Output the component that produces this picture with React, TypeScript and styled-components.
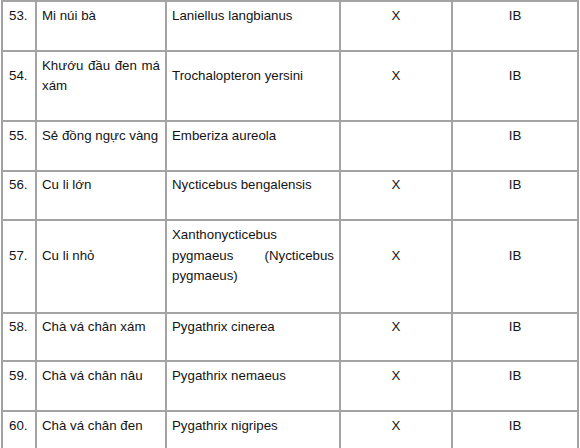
import React from "react";
import styled, { createGlobalStyle } from "styled-components";

const Global = createGlobalStyle`
  html, body { margin: 0; padding: 0; background: #ffffff; }
  body { font-family: "Liberation Sans", Arial, sans-serif; }
`;

const Page = styled.div`
  width: 580px;
  height: 448px;
  overflow: hidden;
  background: #fff;
  padding-left: 1px;
  box-sizing: border-box;
`;

const Table = styled.table`
  border-collapse: collapse;
  table-layout: fixed;
  width: 578px;
  font-family: "Liberation Sans", Arial, sans-serif;
  font-size: 13.3px;
  line-height: 20.5px;
  color: #141414;
`;

const Col = styled.col<{ $w: number }>`
  width: ${(p) => p.$w}px;
`;

const Row = styled.tr<{ $h: number }>`
  height: ${(p) => p.$h}px;
`;

const Cell = styled.td<{ $align?: "left" | "center" | "justify" }>`
  border: 2px solid #a3a3a3;
  padding: 3px 5px 23px 5px;
  vertical-align: middle;
  text-align: ${(p) => p.$align ?? "justify"};
  overflow: hidden;
`;

const NumCell = styled(Cell)`
  padding-left: 6px;
  padding-right: 3px;
  text-align: left;
`;

type Item = {
  no: string;
  name: string;
  sci: string;
  x: boolean;
  group: string;
  h: number;
};

const rows: Item[] = [
  { no: "53.", name: "Mi núi bà", sci: "Laniellus langbianus", x: true, group: "IB", h: 50 },
  { no: "54.", name: "Khướu đầu đen má xám", sci: "Trochalopteron yersini", x: true, group: "IB", h: 70 },
  { no: "55.", name: "Sẻ đồng ngực vàng", sci: "Emberiza aureola", x: false, group: "IB", h: 50 },
  { no: "56.", name: "Cu li lớn", sci: "Nycticebus bengalensis", x: true, group: "IB", h: 47 },
  { no: "57.", name: "Cu li nhỏ", sci: "Xanthonycticebus pygmaeus (Nycticebus pygmaeus)", x: true, group: "IB", h: 93 },
  { no: "58.", name: "Chà vá chân xám", sci: "Pygathrix cinerea", x: true, group: "IB", h: 48 },
  { no: "59.", name: "Chà vá chân nâu", sci: "Pygathrix nemaeus", x: true, group: "IB", h: 50 },
  { no: "60.", name: "Chà vá chân đen", sci: "Pygathrix nigripes", x: true, group: "IB", h: 50 },
];

const widths = [34, 130, 174, 112, 126];

export default function App() {
  return (
    <Page>
      <Global />
      <Table>
        <colgroup>
          {widths.map((w, i) => (
            <Col key={i} $w={w} />
          ))}
        </colgroup>
        <tbody>
          {rows.map((r) => (
            <Row key={r.no} $h={r.h}>
              <NumCell>{r.no}</NumCell>
              <Cell>{r.name}</Cell>
              <Cell>{r.sci}</Cell>
              <Cell $align="center">{r.x ? "X" : ""}</Cell>
              <Cell $align="center">{r.group}</Cell>
            </Row>
          ))}
        </tbody>
      </Table>
    </Page>
  );
}
